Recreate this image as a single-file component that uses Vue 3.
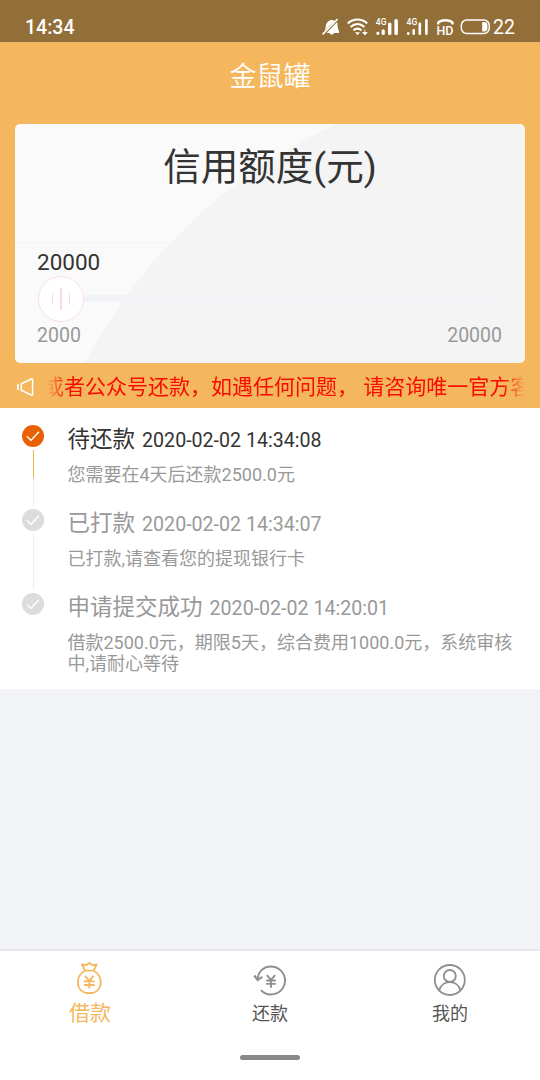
<template>
  <div class="page">
    <div class="status-bar">
      <span class="clock">14:34</span>
      <svg class="status-icons" width="182" height="20" viewBox="320 17 182 20">
        <!-- 静音 -->
        <path d="M323.800 31.600c1.500-1.500 1.700-3.400 2-5.600.6-3.800 3.200-6.200 6.400-6l2.600.8zM337 22c.8 3 .4 6.500 2 9v2h-12.300z" fill="#fff" />
        <path d="M329.500 33h4.500c-.8 2.200-3.700 2.200-4.500 0z" fill="#fff" />
        <path d="M322.600 34.400L337.600 19" stroke="#fff" stroke-width="1.700" />
        <!-- wifi -->
        <g fill="none" stroke="#fff" stroke-width="2.200">
          <path d="M347.800 23.400c5.800-5.200 13.600-5.200 19.400 0" />
          <path d="M350.600 27c4.200-3.800 9.600-3.800 13.800 0" />
          <path d="M353.500 30.400c2.500-2.200 5.500-2.200 8 0" />
        </g>
        <path d="M355 32.300h5l-2.500 2.900z" fill="#fff" />
        <path d="M364.800 29.500v5M362.600 32.500h4.600l-2.300 2.500z" fill="#fff" stroke="#fff" stroke-width=".8" />
        <!-- 信号 -->
        <g fill="#fff">
          <rect x="376.400" y="31.800" width="3" height="3.200" rx="1.400" />
          <rect x="381.600" y="29.200" width="3.200" height="5.800" rx="1.500" />
          <rect x="388" y="22.500" width="3.400" height="12.500" rx="1.500" />
          <rect x="394.400" y="19" width="3.500" height="16" rx="1.600" />
          <rect x="407" y="32" width="2.600" height="3" rx="1.300" />
          <rect x="412.400" y="29" width="2.600" height="6" rx="1.300" />
          <rect x="418.500" y="22.500" width="2.600" height="12.500" rx="1.200" />
          <rect x="425.100" y="19" width="2.600" height="16" rx="1.200" />
        </g>
        <text class="net" x="375.800" y="25.200">4G</text>
        <text class="net" x="406.600" y="25.200">4G</text>
        <!-- HD -->
        <path d="M438.200 24.600v-2c3-3.200 11.500-3.200 14.300 0v2" fill="none" stroke="#fff" stroke-width="2.400" />
        <text class="hd" x="436.400" y="35">HD</text>
        <!-- 电池 -->
        <rect x="461.300" y="20" width="28" height="13.600" rx="5.500" fill="none" stroke="#fff" stroke-width="1.500" />
        <path d="M482.200 22h2.300c1.800 0 2.900 1.300 2.900 2.800v4c0 1.500-1.100 2.800-2.900 2.800h-2.300z" fill="#fff" />
      </svg>
      <span class="battery">22</span>
    </div>

    <div class="hero">
      <h1 class="title">金鼠罐</h1>
      <div class="card">
        <div class="card-top">信用额度(元)</div>
        <div class="card-body">
          <div class="amount">20000</div>
          <div class="slider">
            <div class="thumb"><i></i><i class="long"></i><i></i></div>
            <div class="track"></div>
          </div>
          <div class="range">
            <span>2000</span>
            <span>20000</span>
          </div>
        </div>
      </div>
      <div class="notice">
        <svg width="18" height="20" viewBox="0 0 18 20" fill="none" stroke="#fff">
          <path d="M1 7v6" stroke-width="1.600" />
          <path d="M4.300 6.700l10-4.700q1.300-.5 1.300.8v14.400q0 1.300-1.300.8l-10-4.700z" stroke-width="1.500" stroke-linejoin="round" />
        </svg>
        <div class="marquee"><span>或者公众号还款，如遇任何问题， 请咨询唯一官方客</span></div>
      </div>
    </div>

    <ul class="steps">
      <li v-for="(step, i) in steps" :key="i" class="step" :class="{ active: i === 0 }">
        <div class="rail">
          <svg width="22" height="22" viewBox="0 0 22 22">
            <circle class="dot" cx="11" cy="11" r="11" />
            <path d="M4.800 11.200l4.200 4 8-8.400" fill="none" stroke="#fff" stroke-width="1.400" />
          </svg>
          <div class="line"></div>
        </div>
        <div class="content">
          <div class="head">{{ step.name }} <span class="time">{{ step.time }}</span></div>
          <div class="desc">{{ step.desc }}</div>
        </div>
      </li>
    </ul>

    <div class="bottom">
      <nav class="tabs">
        <div class="tab active">
          <svg width="34" height="34" viewBox="0 .8 34 34" fill="none" stroke="currentColor" stroke-width="1.800" stroke-linejoin="round">
            <path d="M11.800 9.400L9 3.200l4 .8L16.300 1.700 19.600 4l4-.8-2.800 6.200z" />
            <path d="M11.800 9.800C7.500 12 4.900 16.500 4.900 20.800c0 7.300 4.700 11.200 11.400 11.200s11.400-3.900 11.400-11.200c0-4.300-2.600-8.800-6.900-11" />
            <path d="M12 14.600l4.300 5 4.300-5M16.300 19.600v7.600M11 20.200h10.600M11 23.800h10.600" />
          </svg>
          <span>借款</span>
        </div>
        <div class="tab">
          <svg width="34" height="34" viewBox="0 -.9 34 34" fill="none" stroke="currentColor" stroke-width="1.900">
            <path d="M4.500 17C5 9 10.500 3.600 17.800 3.600c8 0 14.200 6.200 14.200 14s-6.200 14-14.200 14c-3.800 0-7.200-1.500-9.800-4.400" />
            <path d="M1.300 12.600l3.400 4.600 4.600-3.200" stroke-width="2.200" />
            <path d="M13.800 12.200l4.200 4.800 4.200-4.800M18 17v7.800M13.200 17.600h9.600M13.200 21h9.600" />
          </svg>
          <span>还款</span>
        </div>
        <div class="tab">
          <svg width="34" height="34" viewBox="0 -1 34 34" fill="none" stroke="currentColor" stroke-width="1.800">
            <circle cx="16.800" cy="17" r="15" />
            <circle cx="16.800" cy="13" r="6" />
            <path d="M6.300 27.500c1-5 5.200-8.300 10.500-8.300s9.500 3.300 10.500 8.300" />
          </svg>
          <span>我的</span>
        </div>
      </nav>
      <div class="home-bar"></div>
    </div>
  </div>
</template>

<script setup>
import { ref } from 'vue'

const steps = ref([
  { name: '待还款', time: '2020-02-02 14:34:08', desc: '您需要在4天后还款2500.0元' },
  { name: '已打款', time: '2020-02-02 14:34:07', desc: '已打款,请查看您的提现银行卡' },
  {
    name: '申请提交成功',
    time: '2020-02-02 14:20:01',
    desc: '借款2500.0元，期限5天，综合费用1000.0元，系统审核中,请耐心等待'
  }
])
</script>

<style>
body {
  margin: 0;
}
</style>

<style scoped>
.page {
  width: 540px;
  height: 1080px;
  display: flex;
  flex-direction: column;
  overflow: hidden;
  background: #f2f3f7;
  font-family: Roboto, 'Noto Sans CJK SC', sans-serif;
  color: #333;
}

.status-bar {
  height: 42px;
  box-sizing: border-box;
  padding: 12px 23px 0 25px;
  display: flex;
  align-items: center;
  background: #926e38;
  color: #fff;
}

.clock {
  padding-top: 2px;
  font-size: 19.5px;
  font-weight: 500;
  line-height: 28px;
}

.status-icons {
  margin-left: auto;
}

.net {
  font-size: 8.5px;
  font-weight: 500;
  fill: #fff;
}

.hd {
  font-size: 12.5px;
  font-weight: 500;
  fill: #fff;
}

.battery {
  width: 24px;
  margin-left: -9px;
  font-size: 19.5px;
  line-height: 29px;
}

.hero {
  height: 366px;
  display: flex;
  flex-direction: column;
  background: #f5b75e;
}

.title {
  margin: 0;
  height: 81.5px;
  line-height: 70px;
  font-size: 27px;
  font-weight: 350;
  text-align: center;
  color: #fff;
}

.card {
  height: 239.5px;
  margin: 0 15px;
  border-radius: 5px;
  background: radial-gradient(circle at 541px 484px, #f4f4f4 530.5px, #fafafa 531.5px);
}

.card-top {
  height: 118px;
  line-height: 86px;
  font-size: 37.5px;
  text-align: center;
  border-bottom: 1px solid #f4f4f4;
}

.card-body {
  padding: 6.5px 22px 0;
}

.amount {
  font-size: 22.5px;
  line-height: 26px;
}

.slider {
  display: flex;
  align-items: center;
  height: 47px;
}

.track {
  flex: 1;
  height: 7px;
  background: #f2f3f7;
}

.thumb {
  width: 44px;
  height: 44px;
  margin-left: 1px;
  display: flex;
  align-items: center;
  justify-content: center;
  gap: 7px;
  border: 1px solid #fbdde3;
  border-radius: 50%;
  background: #fff;
}

.thumb i {
  width: 1.5px;
  height: 12px;
  background: #fbdade;
}

.thumb .long {
  height: 22px;
}

.range {
  display: flex;
  justify-content: space-between;
  margin-top: 2px;
  padding-right: 1px;
  font-size: 19.5px;
  line-height: 23px;
  color: #999;
}

.notice {
  flex: 1;
  padding: 3px 15px 0 17px;
  display: flex;
  align-items: center;
  gap: 12px;
}

.marquee {
  flex: 1;
  overflow: hidden;
  display: flex;
  font-size: 21px;
  line-height: 42px;
  white-space: pre;
  color: #f80c00;
  mask-image: linear-gradient(90deg, transparent, #000 22px, #000 calc(100% - 22px), transparent);
}

.marquee span {
  margin-left: -4px;
}

.steps {
  height: 281px;
  box-sizing: border-box;
  margin: 0;
  padding: 14px 22px 0;
  list-style: none;
  background: #fff;
}

.step {
  display: flex;
  gap: 23.5px;
  min-height: 84px;
  color: #999;
}

.rail {
  width: 22px;
  display: flex;
  flex-direction: column;
  align-items: center;
  padding-top: 3px;
}

.rail svg {
  flex: none;
}

.dot {
  fill: #dcdcdc;
}

.line {
  width: 1px;
  height: 56px;
  margin-top: 3px;
  background: #eee;
}

.step:last-child .line {
  display: none;
}

.active .dot {
  fill: #ea6006;
}

.active .line::before {
  content: '';
  display: block;
  height: 28px;
  background: #f0b350;
}

.content {
  flex: 1;
}

.head {
  font-size: 22.5px;
  line-height: 35px;
}

.active .head {
  color: #333;
}

.time {
  margin-left: 1.5px;
  font-size: 19.6px;
}

.desc {
  margin-top: 6px;
  width: 446px;
  font-size: 18px;
  line-height: 21px;
}

.bottom {
  margin-top: auto;
  height: 131px;
  box-sizing: border-box;
  border-top: 2px solid #e6e7ea;
  background: #fff;
}

.tabs {
  display: flex;
}

.tab {
  flex: 1;
  height: 83px;
  padding-top: 11px;
  display: flex;
  flex-direction: column;
  align-items: center;
  color: #8f8f8f;
}

.tab span {
  margin-top: 4px;
  font-size: 18px;
  line-height: 27px;
  color: #555;
}

.tab.active,
.tab.active span {
  color: #f5b75e;
}

.tab.active span {
  font-size: 21px;
}

.home-bar {
  width: 60px;
  height: 5px;
  margin: 10px auto 0;
  border-radius: 3px;
  background: #888;
}
</style>
